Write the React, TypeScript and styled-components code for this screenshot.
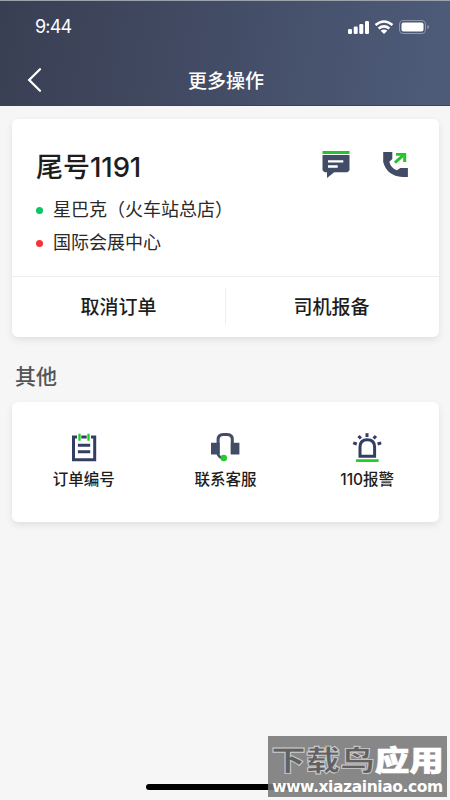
import React from 'react';
import styled, { createGlobalStyle } from 'styled-components';

const GlobalStyle = createGlobalStyle`
  * { box-sizing: border-box; }
  body {
    margin: 0;
    background: #f6f6f6;
    font-family: Inter, "Noto Sans CJK SC", sans-serif;
    color: #1d1d1d;
  }
`;

const Screen = styled.div`
  position: relative;
  width: 450px;
  height: 800px;
  overflow: hidden;
  background: #f6f6f6;
`;

const Header = styled.header`
  height: 106px;
  color: #fff;
  background: linear-gradient(100deg, #393f53 0%, #434c65 48%, #4e5c7a 100%);
  border-top: 1px solid #9ba2ac;
  border-bottom: 1px solid #39435b;
`;

const StatusBar = styled.div`
  display: flex;
  justify-content: space-between;
  align-items: center;
  height: 52px;
  padding: 0 17px 0 35px;
`;

const Clock = styled.span`
  font-size: 18px;
  line-height: 22px;
  letter-spacing: -0.8px;
`;

const StatusIcons = styled.svg`
  width: 86px;
  height: 20px;
  margin-bottom: 1px;
`;

const NavBar = styled.nav`
  display: grid;
  grid-template-columns: 60px 1fr 60px;
  align-items: center;
  height: 54px;
`;

const BackButton = styled.button`
  height: 44px;
  padding: 0 0 0 26px;
  border: 0;
  background: none;
  text-align: left;
  svg { display: block; }
`;

const Title = styled.h1`
  margin: 0;
  padding: 4px 0 0 2px;
  text-align: center;
  font-size: 19px;
  line-height: 28px;
  font-weight: 500;
`;

const Card = styled.section`
  margin: 0 11px 0 12px;
  border-radius: 6px;
  background: #fff;
  box-shadow: 0 3px 7px rgba(0, 0, 0, 0.09);
`;

const OrderCard = styled(Card)`
  height: 218px;
  margin-top: 13px;
`;

const OrderInfo = styled.div`
  height: 158px;
  padding: 28px 28px 0 24px;
  border-bottom: 1px solid #eeeeee;
`;

const OrderHead = styled.div`
  display: flex;
  justify-content: space-between;
  height: 46px;
`;

const PlateNumber = styled.h2`
  margin: 0;
  padding-top: 1px;
  font-size: 27px;
  line-height: 38px;
  font-weight: 500;
`;

const PlateDigits = styled.span`
  font-size: 27.5px;
  letter-spacing: -0.1px;
`;

const Contacts = styled.div`
  display: flex;
  gap: 30px;
  padding-top: 2px;
`;

const Place = styled.div<{ $dot: string }>`
  display: flex;
  align-items: center;
  gap: 10px;
  height: 33px;
  font-size: 18px;
  line-height: 26px;
  font-weight: 400;
  color: #292929;
  &::before {
    content: "";
    width: 7px;
    height: 7px;
    margin-top: 1px;
    border-radius: 50%;
    background: ${(p) => p.$dot};
  }
`;

const OrderActions = styled.div`
  display: grid;
  grid-template-columns: 213px 1fr;
  height: 60px;
`;

const ActionButton = styled.button`
  display: flex;
  justify-content: center;
  height: 36px;
  margin-top: 11px;
  padding: 6px 0 0;
  border: 0;
  background: none;
  font: 500 19px/28px Inter, "Noto Sans CJK SC", sans-serif;
  color: #1d1d1d;
  & + & {
    padding-right: 2px;
    border-left: 1px solid #eeeeee;
  }
`;

const SectionTitle = styled.h3`
  height: 65px;
  margin: 0;
  padding: 25px 0 0 15px;
  font-size: 21px;
  line-height: 30px;
  font-weight: 500;
  color: #555;
`;

const ServiceCard = styled(Card)`
  display: grid;
  grid-template-columns: repeat(3, 1fr);
  height: 120px;
  padding: 0 1px;
`;

const Service = styled.div`
  display: flex;
  flex-direction: column;
  align-items: center;
  padding-top: 30px;
  font-size: 15.5px;
  line-height: 22px;
  font-weight: 500;
  svg { margin-bottom: 5px; }
`;

const HomeIndicator = styled.div`
  position: absolute;
  left: 146px;
  top: 784px;
  width: 158px;
  height: 6px;
  border-radius: 3px;
  background: #000;
`;

const Watermark = styled.div`
  position: absolute;
  left: 268px;
  top: 736px;
  width: 179px;
  height: 61px;
  padding-top: 6px;
  background: rgba(120, 120, 120, 0.88);
  text-align: center;
  color: #fff;
`;

const WatermarkName = styled.div`
  display: flex;
  justify-content: center;
  font: 900 34.5px/36px "Noto Sans CJK SC", sans-serif;
  -webkit-text-stroke: 0.8px #fff;
  transform: scaleY(0.84);
  transform-origin: 50% 20%;
`;

const WatermarkDark = styled.span`
  color: #616161;
  -webkit-text-stroke: 1px #d0d0d0;
`;

const WatermarkUrl = styled.div`
  font: 700 15.5px/18px "DejaVu Sans", sans-serif;
  letter-spacing: -0.4px;
  white-space: nowrap;
`;

const StatusGlyphs = () => (
  <StatusIcons viewBox="0 0 86 20" fill="none">
    <g fill="#fff">
      <rect x="1" y="12" width="4" height="5" rx="1.2" />
      <rect x="6.7" y="9.5" width="4" height="7.5" rx="1.2" />
      <rect x="12.3" y="7" width="4" height="10" rx="1.2" />
      <rect x="18" y="4" width="4" height="13" rx="1.2" />
      <path d="M37 17 33.7 13.8Q37 11.2 40.3 13.8Z" />
    </g>
    <path d="M28.5 8q8.5-7 17 0M31.6 11.5q5.4-4.3 10.8 0" stroke="#fff" strokeWidth="2.5" />
    <rect x="52.5" y="3.5" width="26" height="13" rx="3.5" stroke="#8e97a9" />
    <rect x="54.5" y="5.4" width="22" height="9.2" rx="2" fill="#fff" />
    <path d="M80.3 8v4q1.8-.5 1.8-2t-1.8-2Z" fill="#8e97a9" />
  </StatusIcons>
);

const BackIcon = () => (
  <svg width="18" height="26" viewBox="0 0 18 26" fill="none">
    <path d="M14 2.3 3.2 13 14 23.7" stroke="#fff" strokeWidth="2.3" strokeLinecap="round" />
  </svg>
);

const MessageIcon = () => (
  <svg width="30" height="32" viewBox="0 0 30 32">
    <path d="M1.5 2h27v3h-27Z" fill="#22c52c" />
    <path d="M1.5 6h27v15.2l-2 2H13.2L6 29v-5.8H3.5l-2-2Z" fill="#434c67" />
    <path d="M7 12.4h15.3M7 17.5h9.7" stroke="#fff" strokeWidth="2.4" />
  </svg>
);

const CallIcon = () => (
  <svg width="30" height="32" viewBox="0 0 30 32">
    <path d="M2.2 2.9h9.1v7.2L8.3 12.8q1.6 6.4 7.6 8.5l3.4-2.4h7.6v9.2h-5.4Q5.8 26.8 2.2 13Z" fill="#434c67" />
    <path d="m13.9 13.7 8-7" stroke="#22c52c" strokeWidth="3" />
    <path d="M15 4h10.2v9h-3V6.8H15Z" fill="#22c52c" />
  </svg>
);

const NoteIcon = () => (
  <svg width="30" height="32" viewBox="0 0 30 32" fill="none">
    <path d="M8 5H4.5v22.8h21.2V5H22M12.3 5h5.4" stroke="#343e64" strokeWidth="3" />
    <path d="M8.9 13.2h12.3M8.9 19.8h12.3" stroke="#343e64" strokeWidth="3" />
    <path d="M10.5 1.8v7M19.5 1.8v7" stroke="#20cb25" strokeWidth="2.3" />
  </svg>
);

const HeadsetIcon = () => (
  <svg width="30" height="32" viewBox="0 0 30 32" fill="none">
    <path d="M8.1 22V7.5q0-5 5-5h4.2q5 0 5 5V22" stroke="#434c67" strokeWidth="3" />
    <path d="M1 10.8h8.6v11.7H1ZM20.8 10.8h8.6v11.7h-8.6Z" fill="#434c67" />
    <path d="M8.1 21v1.7q1 2.4 4 3.2" stroke="#434c67" strokeWidth="2.6" />
    <circle cx="13.8" cy="26" r="3.2" fill="#20cb2c" />
  </svg>
);

const AlarmIcon = () => (
  <svg width="30" height="32" viewBox="0 0 30 32" fill="none">
    <path d="M8 24.2V15q0-7.2 7.3-7.2t7.3 7.2v9.2Z" stroke="#343e64" strokeWidth="3" />
    <path d="M15 1.2v3.8M6.5 3.9l2.4 2.7M24 3.9l-2.4 2.7M1.2 10.8l3.6 1.2M29.2 10.8l-3.6 1.2" stroke="#343e64" strokeWidth="3" />
    <path d="M4 28.6h22.6" stroke="#20cb25" strokeWidth="2.7" />
  </svg>
);

const services = [
  { label: '订单编号', Icon: NoteIcon },
  { label: '联系客服', Icon: HeadsetIcon },
  { label: '110报警', Icon: AlarmIcon },
];

export default function App() {
  return (
    <>
      <GlobalStyle />
      <Screen>
        <Header>
          <StatusBar>
            <Clock>9:44</Clock>
            <StatusGlyphs />
          </StatusBar>
          <NavBar>
            <BackButton aria-label="返回"><BackIcon /></BackButton>
            <Title>更多操作</Title>
          </NavBar>
        </Header>
        <OrderCard>
          <OrderInfo>
            <OrderHead>
              <PlateNumber>尾号<PlateDigits>1191</PlateDigits></PlateNumber>
              <Contacts><MessageIcon /><CallIcon /></Contacts>
            </OrderHead>
            <Place $dot="#05c862">星巴克（火车站总店）</Place>
            <Place $dot="#f83235">国际会展中心</Place>
          </OrderInfo>
          <OrderActions>
            <ActionButton>取消订单</ActionButton>
            <ActionButton>司机报备</ActionButton>
          </OrderActions>
        </OrderCard>
        <SectionTitle>其他</SectionTitle>
        <ServiceCard>
          {services.map(({ label, Icon }) => (
            <Service key={label}><Icon />{label}</Service>
          ))}
        </ServiceCard>
        <HomeIndicator />
        <Watermark>
          <WatermarkName><WatermarkDark>下载鸟</WatermarkDark>应用</WatermarkName>
          <WatermarkUrl>www.xiazainiao.com</WatermarkUrl>
        </Watermark>
      </Screen>
    </>
  );
}
